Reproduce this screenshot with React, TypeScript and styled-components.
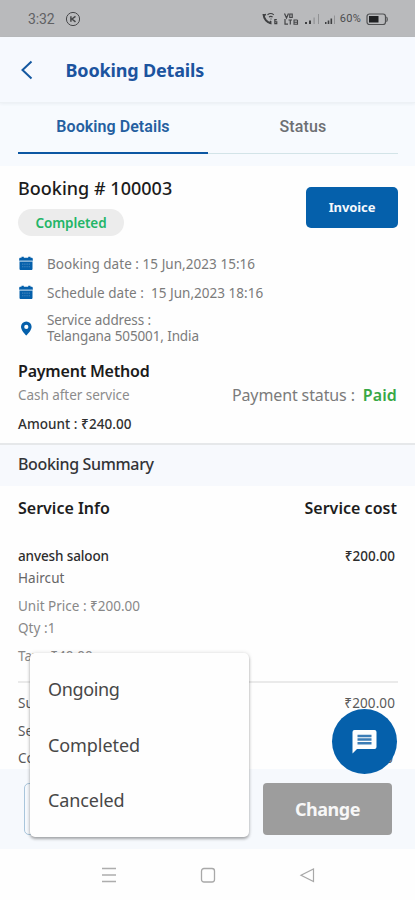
import React from 'react';
import styled, { createGlobalStyle } from 'styled-components';

const GlobalStyle = createGlobalStyle`
  * { box-sizing: border-box; }
  body { margin: 0; background: #fefefe; }
`;

const NOTO = '"Noto Sans", "Open Sans", sans-serif';
const ROBOTO = 'Roboto, "Liberation Sans", sans-serif';
const BLUE = '#0560ab';
const TINT = '#f6f9fe';

const Screen = styled.div`
  position: relative;
  display: flex;
  flex-direction: column;
  width: 415px;
  height: 900px;
  overflow: hidden;
  background: #fefefe;
  font-family: ${NOTO};
`;

const Text = styled.span<{
  $size?: number; $weight?: number; $color?: string; $track?: number; $line?: number; $font?: string;
}>`
  display: block;
  white-space: pre;
  font-family: ${p => p.$font ?? NOTO};
  font-size: ${p => p.$size ?? 13.5}px;
  font-weight: ${p => p.$weight ?? 400};
  color: ${p => p.$color ?? '#7b7b7b'};
  letter-spacing: ${p => p.$track ?? 0.06}px;
  line-height: ${p => p.$line ?? 22}px;
`;

const StatusBar = styled.div`
  display: flex;
  align-items: center;
  flex: none;
  height: 37px;
  padding: 1px 26px 0 28px;
  background: #b9babc;
`;

const StatusLeft = styled.div`
  display: flex;
  align-items: center;
  gap: 10px;
`;

const StatusRight = styled.div`
  display: flex;
  align-items: center;
  gap: 5px;
  margin-left: auto;
`;

const SignalPair = styled.div`
  display: flex;
  margin-right: -2px;
`;

const Header = styled.header`
  display: flex;
  align-items: center;
  flex: none;
  gap: 32.5px;
  height: 66px;
  padding-left: 20px;
  background: ${TINT};
  border-bottom: 1px solid #edf1f5;
  box-shadow: 0 1px 3px rgba(60, 80, 100, 0.07);
  z-index: 1;
`;

const Tabs = styled.nav`
  display: flex;
  flex: none;
  height: 63px;
  padding: 0 17px 12px 18px;
  background: #f7fafe;
`;

const Tab = styled.div<{ $active?: boolean }>`
  display: flex;
  justify-content: center;
  flex: 1;
  height: 51px;
  padding-top: 13px;
  border-bottom: ${p => (p.$active ? '2px solid #0c57a3' : 'none')};
  box-shadow: ${p => (p.$active ? 'none' : 'inset 0 -1px 0 #d3e4e8')};
`;

const Overview = styled.section`
  display: flex;
  flex-direction: column;
  flex: none;
  height: 277px;
  padding: 11px 18px 0;
`;

const TitleRow = styled.div`
  display: flex;
  justify-content: space-between;
  height: 72px;
`;

const Badge = styled.div`
  display: flex;
  align-items: center;
  justify-content: center;
  width: 106px;
  height: 27px;
  margin-top: 9px;
  border-radius: 14px;
  background: #ececec;
`;

const InvoiceButton = styled.button`
  display: flex;
  align-items: center;
  justify-content: center;
  width: 92px;
  height: 41px;
  margin: 10px -1px 0 0;
  padding: 0 0 2px;
  border: 0;
  border-radius: 5px;
  background: ${BLUE};
`;

const InfoRow = styled.div<{ $height: number }>`
  display: grid;
  grid-template-columns: 29px 1fr;
  align-items: center;
  height: ${p => p.$height}px;
`;

const PaymentRow = styled.div`
  display: flex;
  align-items: center;
  justify-content: space-between;
  height: 24px;
`;

const Inline = styled.div`
  display: flex;
  gap: 8px;
`;

const SummaryTitle = styled.div`
  flex: none;
  height: 43px;
  padding: 8px 18px 0;
  border-top: 2px solid #e6e8ea;
  background: #f7f9fd;
`;

const Details = styled.section`
  display: flex;
  flex-direction: column;
  flex: none;
  height: 283px;
  padding: 11px 18px 0;
`;

const Line = styled.div<{ $gap?: number; $inset?: number }>`
  display: flex;
  justify-content: space-between;
  margin-top: ${p => p.$gap ?? 0}px;
  padding-right: ${p => p.$inset ?? 0}px;
`;

const Divider = styled.div`
  flex: none;
  height: 2px;
  margin: 14px -1px 0 0;
  background: #eaeaea;
`;

const ActionBar = styled.div`
  display: flex;
  justify-content: space-between;
  flex: none;
  height: 80px;
  padding: 14px 23px 14px 24px;
  background: #f6f9fd;
`;

const SelectField = styled.div`
  width: 225px;
  height: 52px;
  border: 1px solid #a9c6dc;
  border-radius: 5px;
`;

const ChangeButton = styled.button`
  width: 129px;
  height: 52px;
  padding: 0;
  border: 0;
  border-radius: 4px;
  background: #9d9d9d;
  text-align: center;
`;

const NavBar = styled.div`
  display: flex;
  align-items: center;
  justify-content: center;
  gap: 83px;
  flex: 1;
  background: #fefefe;
`;

const Menu = styled.div`
  position: absolute;
  left: 30px;
  top: 653px;
  width: 219px;
  height: 184px;
  padding: 9px 18px;
  border-radius: 5px;
  background: #fefefe;
  box-shadow: 0 2px 3px rgba(0, 0, 0, 0.3), 0 0 4px rgba(0, 0, 0, 0.13);
`;

const ChatButton = styled.div`
  position: absolute;
  left: 332px;
  top: 709px;
  display: flex;
  align-items: center;
  justify-content: center;
  width: 65px;
  height: 65px;
  border-radius: 50%;
  background: ${BLUE};
`;

const CalendarIcon = () => (
  <svg width="16" height="15" viewBox="0 0 16 15">
    <path d="M3.500.7h2.300v1.100h4.400V.7h2.300v1.100h1c.8 0 1.300.5 1.300 1.300v1.600H1.200V3.100c0-.8.5-1.300 1.300-1.300h1z" fill={BLUE} />
    <path d="M1.500 5.500h13v7.300c0 .8-.5 1.300-1.300 1.300H2.800c-.8 0-1.300-.5-1.300-1.300z" fill={BLUE} />
    <path d="M1.500 5.100h13" stroke="#8db9dc" strokeWidth=".8" />
    <path d="M4 8.100h8M4 10.700h8" stroke="#3f83bd" strokeWidth="1.100" strokeDasharray="1.400 .8" />
  </svg>
);

const PinIcon = () => (
  <svg width="16" height="15" viewBox="0 0 16 15">
    <path fillRule="evenodd" d="M8.300.5A5.300 5.300 0 0 0 3 5.800c0 3.400 3.900 7.400 5.300 8.800 1.400-1.400 5.300-5.400 5.300-8.800A5.300 5.300 0 0 0 8.300.5zm0 3.300a2.100 2.100 0 1 1 0 4.200 2.100 2.100 0 0 1 0-4.200z" fill={BLUE} />
  </svg>
);

const CloseBadgeIcon = () => (
  <svg width="16" height="16" viewBox="0 0 16 16" fill="none" stroke="#47484a">
    <circle cx="8" cy="8" r="6.600" strokeWidth="1" />
    <path d="M5.900 5.200v5.600M10.500 5.300 7 8l3.500 2.800" strokeWidth="1.500" />
  </svg>
);

const CallIcon = () => (
  <svg width="16" height="14" viewBox="0 0 16 14" fill="none" stroke="#3f4042">
    <path d="M1.500 2c.3 5 3.500 9 8 9.500" strokeWidth="2" />
    <path d="M1 3.500 4 2.500M7.500 11.500l1.500-2.500" strokeWidth="1.600" />
    <path d="M5.500 2.800c2-1.500 4.500-1.500 6.300 0M7 5c1.200-.8 2.500-.8 3.600 0M8.500 7h1" strokeWidth="1.100" />
    <path d="M14.800 7.600h-2v4h2V9.700h-1.500" strokeWidth="1.100" />
  </svg>
);

const VolteIcon = () => (
  <svg width="16" height="14" viewBox="0 0 16 14" fill="none" stroke="#444547">
    <path d="M1.500 1.500 3.500 6l2-4.500M6.800 2h2.400v3.500H6.800z" strokeWidth="1.200" />
    <path d="M2 7v5.200h3M5.500 8h3.500M7.300 8v4.500" strokeWidth="1.200" />
    <path d="M10.500 8h4M11 8v4.200h3.500V8M11 10.200h3.500" strokeWidth="1.100" />
  </svg>
);

const SignalIcon = () => (
  <svg width="20" height="14" viewBox="0 0 20 14">
    <path d="M1 10h2v2H1zM5 8.500h2V12H5z" fill="#3f4042" />
    <path d="M9.500 5.500h1.200V12H9.500zM14 2h1v10h-1z" fill="#919294" />
  </svg>
);

const SmallSignalIcon = () => (
  <svg width="13" height="14" viewBox="0 0 13 14">
    <path d="M1 10h1.500v2H1zM3.700 8.500h1.600V12H3.700zM6.500 6.500h1.600V12H6.500z" fill="#3f4042" />
    <path d="M10 3.500h1V12h-1z" fill="#929395" />
  </svg>
);

const BatteryIcon = () => (
  <svg width="23" height="13" viewBox="0 0 23 13">
    <rect x="1" y="1" width="18.500" height="10.500" rx="2.500" fill="none" stroke="#505153" strokeWidth="1.200" />
    <path d="M20.300 4c1.300.3 1.300 4.200 0 4.500" fill="none" stroke="#505153" strokeWidth="1.200" />
    <rect x="3" y="3" width="9.500" height="6.500" fill="#202123" />
  </svg>
);

const BackIcon = () => (
  <svg width="13" height="20" viewBox="0 0 13 20">
    <path d="M11.500 1.500 2.500 10l9 8.500" fill="none" stroke="#1458a0" strokeWidth="2" />
  </svg>
);

const ChatIcon = () => (
  <svg width="27" height="26" viewBox="0 0 27 26">
    <path d="M3.500 1h20A2 2 0 0 1 25.500 3v15a2 2 0 0 1-2 2H6l-4.500 4.500V3a2 2 0 0 1 2-2z" fill="#fdfefe" />
    <path d="M6.500 6.900h14M6.500 10.600h14M6.500 14.300h14" stroke="#3b7db6" strokeWidth="2.500" />
  </svg>
);

const dark = '#5a5a5a';

export default function App() {
  return (
    <>
      <GlobalStyle />
      <Screen>
        <StatusBar>
          <StatusLeft>
            <Text $font={ROBOTO} $size={14} $track={-0.1} $color="#606163">3:32</Text>
            <CloseBadgeIcon />
          </StatusLeft>
          <StatusRight>
            <CallIcon />
            <VolteIcon />
            <SignalPair>
              <SignalIcon />
              <SmallSignalIcon />
            </SignalPair>
            <Text $font={ROBOTO} $size={11} $track={0.3} $color="#4c4d4f">60%</Text>
            <BatteryIcon />
          </StatusRight>
        </StatusBar>

        <Header>
          <BackIcon />
          <Text $size={18} $weight={700} $track={-0.17} $color="#1c549f">Booking Details</Text>
        </Header>

        <Tabs>
          <Tab $active>
            <Text $font={ROBOTO} $size={16} $weight={600} $track={0.06} $color="#255fa0">Booking Details</Text>
          </Tab>
          <Tab>
            <Text $font={ROBOTO} $size={16} $weight={500} $track={0.15} $color="#6d6f73">Status</Text>
          </Tab>
        </Tabs>

        <Overview>
          <TitleRow>
            <div>
              <Text $size={18} $weight={500} $track={0.02} $line={23} $color="#1b1b1b">Booking # 100003</Text>
              <Badge>
                <Text $weight={600} $track={-0.1} $color="#23b567">Completed</Text>
              </Badge>
            </div>
            <InvoiceButton>
              <Text $size={13} $weight={700} $track={-0.1} $color="#f4f8fc">Invoice</Text>
            </InvoiceButton>
          </TitleRow>
          <InfoRow $height={29}>
            <CalendarIcon />
            <Text $track={0.04}>Booking date : 15 Jun,2023 15:16</Text>
          </InfoRow>
          <InfoRow $height={29}>
            <CalendarIcon />
            <Text $track={0.02}>{'Schedule date :  15 Jun,2023 18:16'}</Text>
          </InfoRow>
          <InfoRow $height={42}>
            <PinIcon />
            <div>
              <Text $track={-0.1} $line={16}>Service address :</Text>
              <Text $track={-0.12} $line={16}>Telangana 505001, India</Text>
            </div>
          </InfoRow>
          <Line $gap={10}>
            <Text $size={16} $weight={600} $track={-0.2} $line={24} $color="#1b1b1b">Payment Method</Text>
          </Line>
          <PaymentRow>
            <Text $track={-0.04} $color="#8c8c8c">Cash after service</Text>
            <Inline>
              <Text $size={16} $track={-0.12}>Payment status :</Text>
              <Text $size={16} $weight={600} $track={0.1} $color="#38a845">Paid</Text>
            </Inline>
          </PaymentRow>
          <Line $gap={6}>
            <Text $weight={500} $track={0.05} $color="#303030">Amount : ₹240.00</Text>
          </Line>
        </Overview>

        <SummaryTitle>
          <Text $size={16} $weight={500} $track={-0.35} $color="#333437">Booking Summary</Text>
        </SummaryTitle>

        <Details>
          <Line>
            <Text $size={16} $weight={600} $track={0} $color="#1d1d1d">Service Info</Text>
            <Text $size={16} $weight={600} $track={0.03} $color="#1d1d1d">Service cost</Text>
          </Line>
          <Line $gap={26} $inset={2}>
            <Text $weight={500} $track={-0.12} $color="#2d2d2d">anvesh saloon</Text>
            <Text $weight={500} $track={0.05} $color="#2d2d2d">₹200.00</Text>
          </Line>
          <Line>
            <Text $color="#666">Haircut</Text>
          </Line>
          <Line $gap={6}>
            <Text $track={0} $color="#888">Unit Price : ₹200.00</Text>
          </Line>
          <Line>
            <Text $color="#888">Qty :1</Text>
          </Line>
          <Line $gap={6}>
            <Text $color="#888">Tax : ₹40.00</Text>
          </Line>
          <Divider />
          <Line $gap={9} $inset={2}>
            <Text $color={dark}>Su</Text>
            <Text $track={0.1} $color={dark}>₹200.00</Text>
          </Line>
          <Line $gap={6}>
            <Text $color={dark}>Se</Text>
          </Line>
          <Line $gap={5} $inset={4}>
            <Text $color={dark}>Co</Text>
            <Text $color={dark}>0</Text>
          </Line>
        </Details>

        <ActionBar>
          <SelectField />
          <ChangeButton>
            <Text $size={18} $weight={700} $track={-0.5} $color="#f7f7f7">Change</Text>
          </ChangeButton>
        </ActionBar>

        <NavBar>
          <svg width="16" height="16" viewBox="0 0 16 16">
            <path d="M1 1.500h14M1 8h14M1 14.500h14" stroke="#adadad" strokeWidth="1.300" />
          </svg>
          <svg width="16" height="16" viewBox="0 0 16 16">
            <rect x="1.500" y="1.500" width="13" height="13.500" rx="2.500" fill="none" stroke="#a8a8a8" strokeWidth="1.300" />
          </svg>
          <svg width="16" height="16" viewBox="0 0 16 16">
            <path d="M14.500 2v12.500L2 8.200z" fill="none" stroke="#a8a8a8" strokeWidth="1.200" />
          </svg>
        </NavBar>

        <Menu>
          <Text $size={18} $track={-0.35} $line={55} $color="#474747">Ongoing</Text>
          <Text $size={18} $track={-0.08} $line={56} $color="#474747">Completed</Text>
          <Text $size={18} $track={-0.1} $line={55} $color="#474747">Canceled</Text>
        </Menu>
        <ChatButton>
          <ChatIcon />
        </ChatButton>
      </Screen>
    </>
  );
}
